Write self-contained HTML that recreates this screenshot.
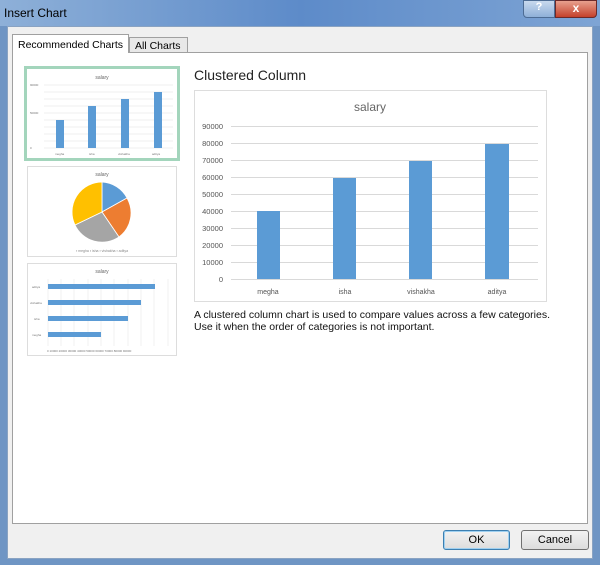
<!DOCTYPE html>
<html><head><style>
*{margin:0;padding:0;box-sizing:border-box}
body{width:600px;height:565px;overflow:hidden;background:#6f95c4;font-family:"Liberation Sans",sans-serif;position:relative}
.title{position:absolute;left:0;top:0;width:600px;height:26px;background:linear-gradient(90deg,#8eb0d8,#5d8bc9 50%,#7ea4d4);}
.title span{position:absolute;left:4px;top:6px;font-size:12px;color:#000}
.help{position:absolute;left:523px;top:0;width:32px;height:18px;border:1px solid #4d6c94;border-radius:0 0 0 4px;background:linear-gradient(#c8d9ee,#8fb0d8);color:#fff;font-size:11px;text-align:center;font-weight:bold}
.close{position:absolute;left:555px;top:0;width:42px;height:18px;border:1px solid #6b2a2a;border-radius:0 0 4px 0;background:linear-gradient(#e8a08e,#c4412b);color:#fff;font-size:12px;text-align:center;font-weight:bold}
.dlg{position:absolute;left:7px;top:26px;width:586px;height:533px;background:#f0f0f0;border:1px solid #8aa3c2}
.panel{position:absolute;left:12px;top:52px;width:576px;height:472px;background:#fff;border:1px solid #a0a0a0}
.tab1{position:absolute;left:12px;top:34px;width:117px;height:19px;background:#fff;border:1px solid #a0a0a0;border-bottom:none;font-size:10.5px;padding:4px 0 0 5px;z-index:2;white-space:nowrap}
.tab2{position:absolute;left:129px;top:37px;width:59px;height:16px;background:#e8e8e8;border:1px solid #a0a0a0;font-size:10.5px;padding:2px 0 0 5px;white-space:nowrap}
.btn{position:absolute;top:530px;height:20px;border:1px solid #707070;border-radius:3px;background:linear-gradient(#f2f2f2,#dcdcdc);font-size:11px;text-align:center;line-height:18px}
.abs{position:absolute}
</style></head><body>
<div class="title"><span>Insert Chart</span></div>
<div class="help">?</div><div class="close">x</div>
<div class="dlg"></div>
<div class="tab2">All Charts</div>
<div class="panel"></div>
<div class="tab1">Recommended Charts</div>

<div class="abs" style="left:24px;top:66px;width:156px;height:95px;border:3px solid #a3d5bc;background:#fff">
<svg width="150" height="89" style="position:absolute;left:0;top:0">
<text x="75" y="10" font-size="5" text-anchor="middle" fill="#666">salary</text>
<g stroke="#e0e0e0" stroke-width="0.6"><line x1="17" y1="16" x2="146" y2="16"/><line x1="17" y1="23" x2="146" y2="23"/><line x1="17" y1="30" x2="146" y2="30"/><line x1="17" y1="37" x2="146" y2="37"/><line x1="17" y1="44" x2="146" y2="44"/><line x1="17" y1="51" x2="146" y2="51"/><line x1="17" y1="58" x2="146" y2="58"/><line x1="17" y1="65" x2="146" y2="65"/><line x1="17" y1="72" x2="146" y2="72"/><line x1="17" y1="79" x2="146" y2="79"/></g>
<g fill="#5b9bd5"><rect x="29" y="51" width="8" height="28"/><rect x="61" y="37" width="8" height="42"/><rect x="94" y="30" width="8" height="49"/><rect x="127" y="23" width="8" height="56"/></g>
<g font-size="3" fill="#777"><text x="3" y="17">90000</text><text x="3" y="45">50000</text><text x="3" y="80">0</text><text x="28" y="86">megha</text><text x="62" y="86">isha</text><text x="91" y="86">vishakha</text><text x="125" y="86">aditya</text></g>
</svg></div>

<div class="abs" style="left:27px;top:166px;width:150px;height:91px;border:1px solid #ddd;background:#fff">
<svg width="148" height="89">
<text x="74" y="9" font-size="5" text-anchor="middle" fill="#666">salary</text>
<g transform="translate(74,45)" stroke="#fff" stroke-width="0.8">
<path d="M0,0 L0,-30 A30,30 0 0 1 25,-14 Z" fill="#5b9bd5"/>
<path d="M0,0 L25,-14 A30,30 0 0 1 17,25 Z" fill="#ed7d31"/>
<path d="M0,0 L17,25 A30,30 0 0 1 -27,13 Z" fill="#a5a5a5"/>
<path d="M0,0 L-27,13 A30,30 0 0 1 0,-30 Z" fill="#ffc000"/>
</g>
<text x="74" y="85" font-size="3.5" text-anchor="middle" fill="#888">▪ megha ▪ isha ▪ vishakha ▪ aditya</text>
</svg></div>

<div class="abs" style="left:27px;top:263px;width:150px;height:93px;border:1px solid #ddd;background:#fff">
<svg width="148" height="91">
<text x="74" y="9" font-size="5" text-anchor="middle" fill="#666">salary</text>
<g stroke="#e6e6e6" stroke-width="0.6"><line x1="20" y1="15" x2="20" y2="82"/><line x1="33" y1="15" x2="33" y2="82"/><line x1="46" y1="15" x2="46" y2="82"/><line x1="60" y1="15" x2="60" y2="82"/><line x1="73" y1="15" x2="73" y2="82"/><line x1="86" y1="15" x2="86" y2="82"/><line x1="100" y1="15" x2="100" y2="82"/><line x1="113" y1="15" x2="113" y2="82"/><line x1="126" y1="15" x2="126" y2="82"/><line x1="140" y1="15" x2="140" y2="82"/></g>
<g fill="#5b9bd5"><rect x="20" y="20" width="107" height="5"/><rect x="20" y="36" width="93" height="5"/><rect x="20" y="52" width="80" height="5"/><rect x="20" y="68" width="53" height="5"/></g>
<g font-size="3" fill="#777"><text x="4" y="24">aditya</text><text x="2" y="40">vishakha</text><text x="6" y="56">isha</text><text x="4" y="72">megha</text><text x="19" y="88">0  10000  20000  30000  40000  50000  60000  70000  80000  90000</text></g>
</svg></div>

<div class="abs" style="left:194px;top:67px;font-size:14px;color:#222">Clustered Column</div>
<div class="abs" style="left:194px;top:90px;width:353px;height:212px;border:1px solid #ddd;background:#fff">
<svg width="351" height="210">
<text x="175" y="20" font-size="12" text-anchor="middle" fill="#666">salary</text>
<g stroke="#d9d9d9" stroke-width="1">
<line x1="36" y1="35.5" x2="343" y2="35.5"/><line x1="36" y1="52.5" x2="343" y2="52.5"/><line x1="36" y1="69.5" x2="343" y2="69.5"/><line x1="36" y1="86.5" x2="343" y2="86.5"/><line x1="36" y1="103.5" x2="343" y2="103.5"/><line x1="36" y1="120.5" x2="343" y2="120.5"/><line x1="36" y1="137.5" x2="343" y2="137.5"/><line x1="36" y1="154.5" x2="343" y2="154.5"/><line x1="36" y1="171.5" x2="343" y2="171.5"/><line x1="36" y1="188.5" x2="343" y2="188.5"/></g>
<g fill="#5b9bd5"><rect x="62" y="120" width="23" height="68"/><rect x="138" y="87" width="23" height="101"/><rect x="214" y="70" width="23" height="118"/><rect x="290" y="53" width="24" height="135"/></g>
<g font-size="7.5" fill="#555" text-anchor="end"><text x="28" y="38">90000</text><text x="28" y="55">80000</text><text x="28" y="72">70000</text><text x="28" y="89">60000</text><text x="28" y="106">50000</text><text x="28" y="123">40000</text><text x="28" y="140">30000</text><text x="28" y="157">20000</text><text x="28" y="174">10000</text><text x="28" y="191">0</text></g>
<g font-size="7" fill="#555" text-anchor="middle"><text x="73" y="203">megha</text><text x="150" y="203">isha</text><text x="226" y="203">vishakha</text><text x="302" y="203">aditya</text></g>
</svg></div>
<div class="abs" style="left:194px;top:309px;font-size:10.5px;line-height:12px;color:#111;white-space:nowrap">A clustered column chart is used to compare values across a few categories.<br>Use it when the order of categories is not important.</div>

<div class="btn" style="left:443px;width:67px;border-color:#3c7fb1;box-shadow:inset 0 0 0 1px #9fd0f0">OK</div>
<div class="btn" style="left:521px;width:68px">Cancel</div>
</body></html>
